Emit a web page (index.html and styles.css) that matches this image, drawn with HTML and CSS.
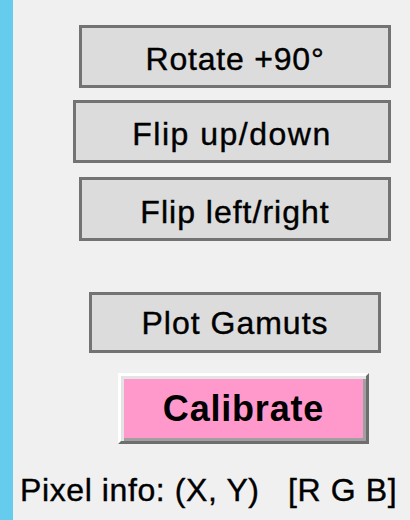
FILE: index.html
```html
<!DOCTYPE html>
<html>
<head>
<meta charset="utf-8">
<link rel="stylesheet" href="styles.css">
</head>
<body>
<div class="bar"></div>
<div class="panel">
  <div class="btn btn-rotate">Rotate +90°</div>
  <div class="btn btn-updown">Flip up/down</div>
  <div class="btn btn-leftright">Flip left/right</div>
  <div class="btn btn-gamuts">Plot Gamuts</div>
  <div class="calibrate">Calibrate</div>
  <div class="info">Pixel info: (X, Y)&nbsp;&nbsp;&nbsp;[R G B]</div>
</div>
</body>
</html>
```
FILE: styles.css
```css
html, body {
  margin: 0;
  padding: 0;
  background: #f0f0f0;
}
body {
  display: flex;
  width: 410px;
  height: 520px;
  overflow: hidden;
  font-family: "Liberation Sans", Arial, sans-serif;
  color: #000;
}
.bar {
  width: 13px;
  flex: none;
  background: #66ccee;
}
.panel {
  flex: 1;
  display: flex;
  flex-direction: column;
  padding-top: 25px;
}
.btn {
  box-sizing: border-box;
  align-self: flex-end;
  display: flex;
  align-items: center;
  justify-content: center;
  border: 3px solid #737373;
  background: #dcdcdc;
  font-size: 32px;
  letter-spacing: 1px;
  -webkit-text-stroke: 0.4px #000;
  padding-top: 6px;
  white-space: nowrap;
}
.btn-rotate {
  width: 312px;
  height: 63px;
  margin-right: 19px;
  letter-spacing: 0.8px;
}
.btn-updown {
  width: 318px;
  height: 63px;
  margin-right: 19px;
  margin-top: 12px;
  letter-spacing: 1.5px;
}
.btn-leftright {
  width: 312px;
  height: 64px;
  margin-right: 19px;
  margin-top: 14px;
}
.btn-gamuts {
  width: 292px;
  height: 61px;
  margin-right: 29px;
  margin-top: 51px;
  padding-top: 2px;
}
.calibrate {
  box-sizing: border-box;
  align-self: flex-end;
  width: 251px;
  height: 71px;
  margin-right: 41px;
  margin-top: 20px;
  display: flex;
  align-items: center;
  justify-content: center;
  background: #ff99cc;
  border-style: solid;
  border-width: 3px;
  border-color: #ffffff #6e6e6e #6e6e6e #ffffff;
  box-shadow: inset 3px 3px 0 #e3e3e3, inset -3px -3px 0 #a0a0a0;
  font-size: 36px;
  font-weight: bold;
  letter-spacing: 0.8px;
  white-space: nowrap;
}
.info {
  margin-top: 28px;
  margin-left: 7px;
  font-size: 32px;
  line-height: 37px;
  letter-spacing: 0.6px;
  -webkit-text-stroke: 0.4px #000;
  white-space: nowrap;
}
```
